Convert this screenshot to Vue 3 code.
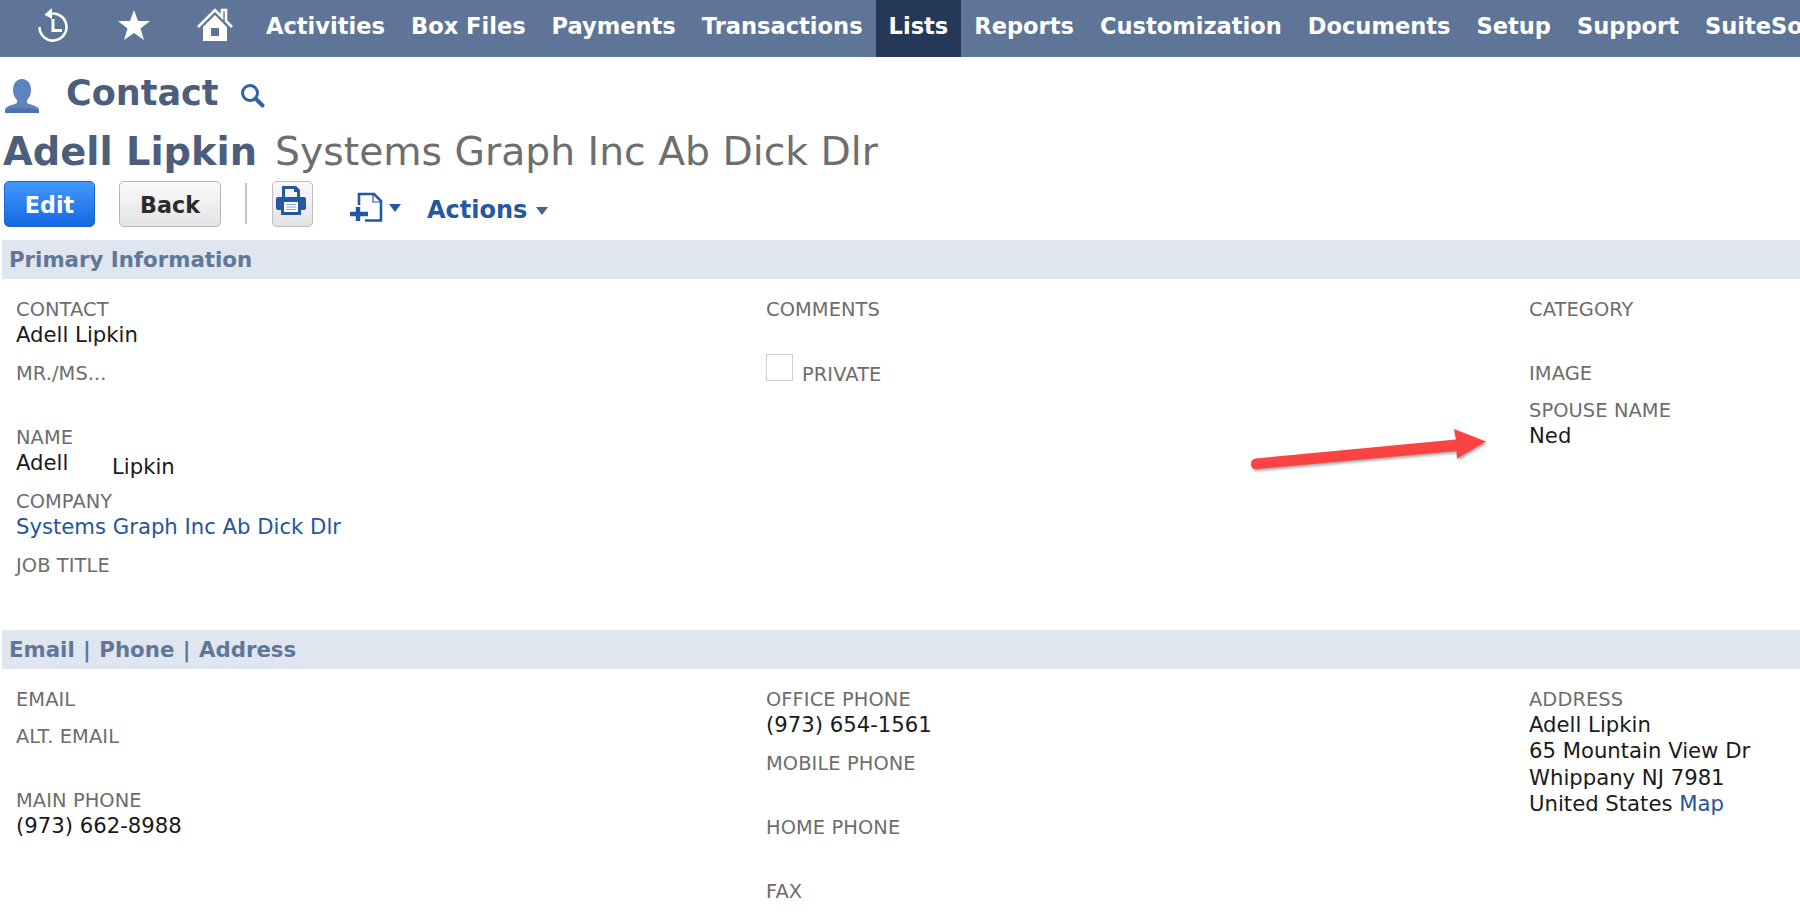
<script setup>
const navItems = ['Activities', 'Box Files', 'Payments', 'Transactions', 'Lists', 'Reports', 'Customization', 'Documents', 'Setup', 'Support', 'SuiteSocial']
</script>

<template>
  <div class="page">
    <nav class="nav">
      <div class="nav-icons">
        <span class="slot">
          <svg width="34" height="36" viewBox="0 0 34 36">
            <path d="M10 8.5 A13.5 13.5 0 1 1 3.5 20" fill="none" stroke="#fff" stroke-width="2.6" />
            <path d="M16 1 L16 12 L8.5 7.5 Z" fill="#fff" />
            <path d="M17 12 V23.5 H26" fill="none" stroke="#fff" stroke-width="3" />
          </svg>
        </span>
        <span class="slot">
          <svg width="34" height="34" viewBox="0 0 34 34">
            <polygon points="17,2 21,13 33,13 23.5,20.5 27,32 17,25 7,32 10.5,20.5 1,13 13,13" fill="#fff" />
          </svg>
        </span>
        <span class="slot">
          <svg width="36" height="34" viewBox="0 0 36 34">
            <path d="M1 19 L18 2 L25 9 V2 H29 V13 L35 19" fill="none" stroke="#fff" stroke-width="2.6" />
            <path fill-rule="evenodd" d="M18 7 L30 19 V33 H6 V19 Z M14 20 V28 H22 V20 Z" fill="#fff" />
          </svg>
        </span>
      </div>
      <a v-for="item in navItems" :key="item" class="nav-item" :class="{ active: item === 'Lists' }">{{ item }}</a>
    </nav>

    <header class="type-row">
      <svg class="person" width="34" height="34" viewBox="0 0 34 34">
        <path d="M17 0 C23 0 26 5 26 11 C26 16 24 19 22 21 V24 C26 26 34 27 34 31 V33 Q34 34 33 34 H1 Q0 34 0 33 V31 C0 27 8 26 12 24 V21 C10 19 8 16 8 11 C8 5 11 0 17 0 Z" fill="#5f83bf" />
        <path d="M0 31 C6 29 12 29 17 29 C22 29 28 29 34 31 V33 Q34 34 33 34 H1 Q0 34 0 33 Z" fill="#4f70a8" />
      </svg>
      <h1 class="type-title">Contact</h1>
      <svg class="search" width="25" height="25" viewBox="0 0 25 25">
        <circle cx="10" cy="10" r="7.5" fill="#fff" stroke="#2d62ad" stroke-width="3" />
        <path d="M15.5 15.5 L22.5 22.5" stroke="#2d62ad" stroke-width="4" stroke-linecap="round" />
      </svg>
    </header>

    <div class="record-title">
      <span class="record-name">Adell Lipkin</span>
      <span class="record-company">Systems Graph Inc Ab Dick Dlr</span>
    </div>

    <div class="toolbar">
      <button class="btn btn-primary">Edit</button>
      <button class="btn btn-default">Back</button>
      <span class="sep"></span>
      <button class="btn-icon">
        <svg width="32" height="31" viewBox="0 0 32 31">
          <path fill-rule="evenodd" d="M7 1 H21 L25 5 V12 H29 Q31 12 31 14 V23 Q31 25 29 25 H26 V30 H6 V25 H3 Q1 25 1 23 V14 Q1 12 3 12 H7 Z M10 4 V12 H22 V7 H19 V4 Z M9 17 V27 H23 V17 Z" fill="#2458a3" />
          <path d="M9 17 H23 V27 H9 Z" fill="#fff" />
          <path d="M11 19.5 H21 M11 22 H21 M11 24.5 H21" stroke="#8ea8cf" stroke-width="1.2" />
        </svg>
      </button>
      <span class="add-new">
        <svg width="34" height="30" viewBox="0 0 34 30">
          <path d="M10 13 V2 H25 L32 9 V28.5 H16" fill="none" stroke="#2458a3" stroke-width="2.6" />
          <path d="M24 2 V10 H32" fill="none" stroke="#2458a3" stroke-width="1.2" />
          <path d="M9 15 V29 M1 22 H19" stroke="#2458a3" stroke-width="4.4" />
        </svg>
        <i class="caret caret-blue"></i>
      </span>
      <span class="actions">Actions<i class="caret caret-grey"></i></span>
    </div>

    <section class="section section-primary">
      <h2 class="band">Primary Information</h2>
      <div class="fields">
        <div class="col">
          <div class="field"><div class="label">CONTACT</div><div class="value">Adell Lipkin</div></div>
          <div class="field"><div class="label">MR./MS...</div><div class="value"></div></div>
          <div class="field">
            <div class="label">NAME</div>
            <div class="value name-row"><span class="first">Adell</span><span class="last">Lipkin</span></div>
          </div>
          <div class="field"><div class="label">COMPANY</div><div class="value"><a class="link">Systems Graph Inc Ab Dick Dlr</a></div></div>
          <div class="field"><div class="label">JOB TITLE</div><div class="value"></div></div>
        </div>
        <div class="col">
          <div class="field comments"><div class="label">COMMENTS</div></div>
          <div class="field private"><span class="checkbox"></span><span class="label">PRIVATE</span></div>
        </div>
        <div class="col">
          <div class="field"><div class="label">CATEGORY</div><div class="value"></div></div>
          <div class="field short"><div class="label">IMAGE</div></div>
          <div class="field"><div class="label">SPOUSE NAME</div><div class="value">Ned</div></div>
        </div>
      </div>
    </section>

    <section class="section">
      <h2 class="band band-multi">Email | Phone | Address</h2>
      <div class="fields">
        <div class="col">
          <div class="field short"><div class="label">EMAIL</div></div>
          <div class="field"><div class="label">ALT. EMAIL</div><div class="value"></div></div>
          <div class="field"><div class="label">MAIN PHONE</div><div class="value">(973) 662-8988</div></div>
        </div>
        <div class="col">
          <div class="field"><div class="label">OFFICE PHONE</div><div class="value">(973) 654-1561</div></div>
          <div class="field"><div class="label">MOBILE PHONE</div><div class="value"></div></div>
          <div class="field"><div class="label">HOME PHONE</div><div class="value"></div></div>
          <div class="field"><div class="label">FAX</div><div class="value"></div></div>
        </div>
        <div class="col">
          <div class="field">
            <div class="label">ADDRESS</div>
            <div class="value address">Adell Lipkin<br />65 Mountain View Dr<br />Whippany NJ 7981<br />United States <a class="link">Map</a></div>
          </div>
        </div>
      </div>
    </section>

    <svg class="arrow" width="260" height="60" viewBox="1240 420 260 60">
      <path d="M1256 458.5 L1456 439.5 L1454 429 L1486 441.5 L1457 458.5 L1456.5 451 L1257 469 Q1251 469.5 1251 464 Q1251 459 1256 458.5 Z" fill="#fb4343" />
    </svg>
  </div>
</template>

<style>
html, body { margin: 0; background: #fff; }
</style>

<style scoped>
.page {
  position: relative;
  width: 1800px;
  height: 912px;
  overflow: hidden;
  background: #fff;
  font-family: "DejaVu Sans", Verdana, sans-serif;
}
.nav {
  display: flex;
  height: 57px;
  background: #5f7598;
  padding-left: 12px;
  white-space: nowrap;
}
.nav-icons { display: flex; width: 241px; flex: none; }
.slot { display: flex; flex: none; width: 81px; height: 50px; align-items: center; justify-content: center; }
.nav-item {
  flex: none;
  padding: 0 13px;
  font-size: 22.55px;
  font-weight: 700;
  line-height: 52px;
  color: #fff;
}
.nav-item.active { background: #253858; }

.type-row { display: flex; align-items: center; height: 58px; padding: 7px 0 0 5px; }
.person { flex: none; margin-top: 6px; }
.type-title {
  margin: 0 0 0 27px;
  font-size: 35px;
  font-weight: 700;
  color: #4b5f7c;
}
.search { margin: 4px 0 0 22px; }

.record-title { display: flex; align-items: baseline; height: 55px; margin-top: -1px; padding-left: 3px; line-height: 62px; }
.record-name { font-size: 38.4px; font-weight: 700; color: #4b5f7c; }
.record-company { margin-left: 18px; font-size: 39.3px; color: #6e6e6e; }

.toolbar { display: flex; align-items: flex-start; height: 64px; padding: 5px 0 0 4px; box-sizing: border-box; }
.btn {
  box-sizing: border-box;
  height: 46px;
  font-family: inherit;
  font-size: 22.2px;
  font-weight: 700;
  border-radius: 5px;
  padding: 2px 0 0;
}
.btn-primary {
  width: 91px;
  color: #fff;
  border: 1px solid #1a63c9;
  background: linear-gradient(#4398fd, #1469e4);
}
.btn-default {
  width: 102px;
  margin-left: 24px;
  color: #2b2b2b;
  border: 1px solid #b5b5b5;
  background: linear-gradient(#fafafa, #e4e4e4);
}
.sep { width: 2px; height: 41px; margin: 2px 0 0 24px; background: #c4c4c4; }
.btn-icon {
  display: flex;
  align-items: flex-start;
  justify-content: center;
  box-sizing: border-box;
  width: 41px;
  height: 46px;
  margin-left: 25px;
  padding: 3px 4px 0 0;
  border: 1px solid #bdbdbd;
  border-radius: 5px;
  background: linear-gradient(#fafafa, #e4e4e4);
}
.add-new { display: flex; align-items: center; margin: 11px 0 0 36px; }
.caret { display: inline-block; width: 0; height: 0; border-left: 6px solid transparent; border-right: 6px solid transparent; }
.caret-blue { margin: 2px 0 0 6px; border-top: 8px solid #2458a3; }
.caret-grey { margin: 0 0 3px 9px; border-top: 8px solid #4d6187; }
.actions {
  margin: 14px 0 0 26px;
  font-size: 24px;
  font-weight: 700;
  line-height: 30px;
  color: #2458a3;
}

.section-primary { height: 390px; }
.band {
  margin: 0 0 0 2px;
  height: 39px;
  padding-left: 7px;
  font-size: 21.3px;
  font-weight: 700;
  line-height: 39px;
  color: #607799;
  background: #e0e6f0;
}
.band-multi { word-spacing: 1px; }
.fields {
  display: grid;
  grid-template-columns: 750px 763px 1fr;
  padding: 17.5px 0 0 16px;
}
.field { height: 64px; }
.field.short { height: 37px; }
.field.comments { height: 57px; }
.label { font-size: 19.4px; line-height: 25px; letter-spacing: 0.1px; color: #6d6d6d; }
.value { font-size: 21.2px; line-height: 26px; color: #1a1a1a; }
.link { color: #255599; }
.name-row { display: flex; }
.first { width: 96px; }
.last { margin-top: 4px; }
.address { line-height: 26.6px; }
.private { display: flex; align-items: flex-start; }
.private .label { margin: 8px 0 0 9px; }
.checkbox { box-sizing: border-box; width: 27px; height: 27px; border: 1px solid #cdcdcd; background: #fff; }
.arrow {
  position: absolute;
  left: 1240px;
  top: 420px;
  filter: drop-shadow(1px 2px 1.5px rgba(0, 0, 0, 0.35));
}
</style>
